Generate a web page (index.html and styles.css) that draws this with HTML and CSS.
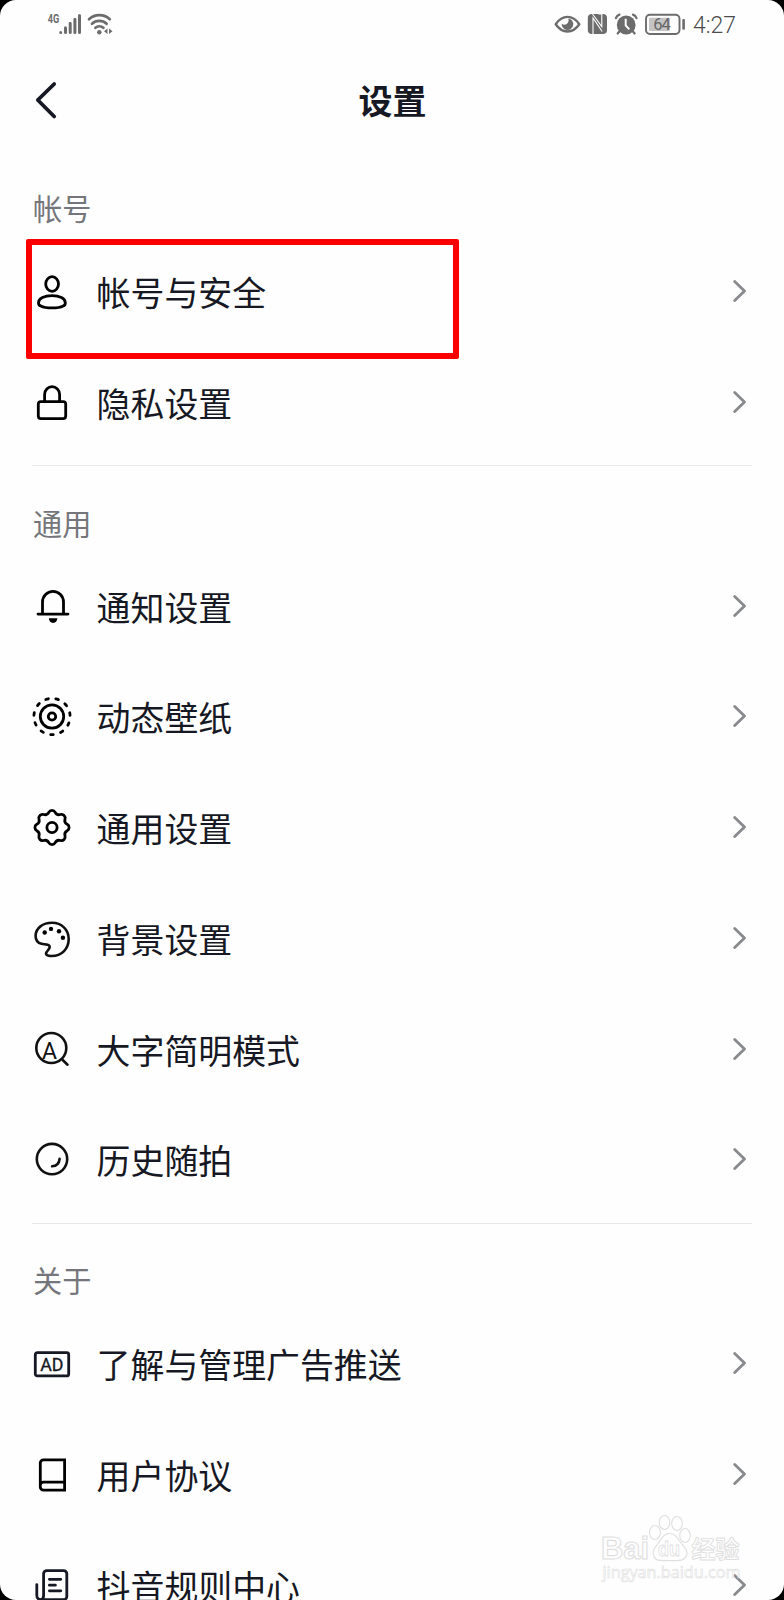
FILE: index.html
```html
<!DOCTYPE html>
<html lang="zh-CN">

<head>
    <meta charset="UTF-8">
    <meta name="viewport" content="width=device-width, initial-scale=1.0">
    <title>设置</title>
    <link rel="stylesheet" href="styles.css">
</head>

<body>
    <div class="phone">
        <div class="status">
            <svg class="status-left" width="70" height="24" viewBox="46 12 70 24">
                <text class="net" x="47.8" y="23" textLength="11.5" lengthAdjust="spacingAndGlyphs">4G</text>
                <g stroke="#6c6c6c" stroke-width="3" stroke-linecap="round">
                    <path d="M60.7 32.4v.1M65.5 27.7v4.8M70.2 23.2v9.3M74.9 19.2v13.3M79.5 15.5v17" />
                </g>
                <g fill="none" stroke="#6c6c6c" stroke-width="2.7" stroke-linecap="round">
                    <path d="M89 19.2a15.5 15.5 0 0 1 20.8 0M92 23.8a10.8 10.8 0 0 1 14.6 0M95.4 27.8a6.3 6.3 0 0 1 8 0" />
                </g>
                <circle cx="99.3" cy="32.2" r="2.2" fill="#6c6c6c" />
                <path d="M107.5 28.5v5.6l-3.5-2.8zM109 28.5v5.6l3.5-2.8z" fill="#6c6c6c" />
            </svg>
            <div class="status-right">
                <svg width="132" height="24" viewBox="554 12 132 24">
                    <path d="M555.7 24.2q5-7.3 11.8-7.3t11.8 7.3q-5 7.3-11.8 7.3t-11.8-7.3z" fill="none" stroke="#6c6c6c" stroke-width="2.4" stroke-linejoin="round" />
                    <path d="M568.5 18.5a5.8 5.8 0 1 1-6.8 5.2q2.5 1.8 4.6.6 2.8-1.7 2.2-5.8z" fill="#6c6c6c" />
                    <rect x="587.8" y="14" width="19.2" height="20" rx="4" fill="#6c6c6c" />
                    <path d="M593 34V18l9.2 13.5M592.5 14l9.3 12.5V14M598.3 14h3.5" fill="none" stroke="#fff" stroke-width="1.1" />
                    <circle cx="626.2" cy="25" r="9.4" fill="#6c6c6c" />
                    <path d="M615.9 18.2q1-2.7 3.6-3.6M632.9 14.6q2.6.9 3.6 3.6M619.3 31.5l-1.6 2M633 31.5l1.6 2" fill="none" stroke="#6c6c6c" stroke-width="2.2" stroke-linecap="round" />
                    <path d="M625.7 18.8v6.5l3.6 4" fill="none" stroke="#fff" stroke-width="2" />
                    <rect x="646" y="14.7" width="33.5" height="19.3" rx="4" fill="none" stroke="#6c6c6c" stroke-width="1.9" />
                    <rect x="649" y="17.7" width="21" height="13.3" rx="1" fill="#c4c4c4" />
                    <text class="battery" x="653.3" y="30.2" textLength="17.5">64</text>
                    <rect x="682.3" y="19" width="2.6" height="10.7" rx="1" fill="#6c6c6c" />
                </svg>
                <span class="time">4:27</span>
            </div>
        </div>

        <div class="header">
            <svg class="back" width="24" height="40" viewBox="0 0 24 40">
                <path d="M19.2 4L2.8 20l16.4 16.5" />
            </svg>
            <h1>设置</h1>
        </div>

        <div class="group">
            <h2>帐号</h2>
            <div class="row">
                <svg class="icon" viewBox="0 0 40 40">
                    <ellipse cx="20.1" cy="12" rx="6.4" ry="7.3" />
                    <path d="M20 23.7c7.5 0 13.3 2.6 13.3 7.2 0 1.3-.6 2.5-2 3-2.5 1.3-6.5 2-11.3 2s-8.8-.7-11.3-2c-1.4-.5-2.2-1.7-2.2-3 0-4.600 6-7.200 13.500-7.200z" />
                </svg>
                <span>帐号与安全</span>
                <svg class="arrow" viewBox="0 0 14 24"><path d="M1.7 2.5l9.8 9.5-9.8 9.5" /></svg>
                <div class="mark"></div>
            </div>
            <div class="row">
                <svg class="icon" viewBox="0 0 40 40">
                    <rect x="6.3" y="18.6" width="27.4" height="17" rx="2.5" />
                    <path d="M12.6 18.6v-7.2a7.5 7.7 0 0 1 15 0v7.2" />
                </svg>
                <span>隐私设置</span>
                <svg class="arrow" viewBox="0 0 14 24"><path d="M1.7 2.5l9.8 9.5-9.8 9.5" /></svg>
            </div>
        </div>

        <div class="group">
            <h2>通用</h2>
            <div class="row">
                <svg class="icon" viewBox="0 0 40 40">
                    <path d="M6 27.1h30M10.5 26.3V15a10.5 10.7 0 0 1 21 0v11.3" />
                    <path class="solid" d="M16.8 31.3h8.600q-.5 4.600-4.300 4.600t-4.300-4.600z" />
                </svg>
                <span>通知设置</span>
                <svg class="arrow" viewBox="0 0 14 24"><path d="M1.7 2.5l9.8 9.5-9.8 9.5" /></svg>
            </div>
            <div class="row">
                <svg class="icon" viewBox="0 0 40 40">
                    <circle cx="20" cy="19.5" r="3.7" />
                    <circle cx="20" cy="19.5" r="11.7" />
                    <circle class="dashes" cx="20" cy="19.5" r="18.1" pathLength="110" transform="rotate(86 20 19.5)" />
                </svg>
                <span>动态壁纸</span>
                <svg class="arrow" viewBox="0 0 14 24"><path d="M1.7 2.5l9.8 9.5-9.8 9.5" /></svg>
            </div>
            <div class="row">
                <svg class="icon" viewBox="0 0 40 40">
                    <g transform="translate(20 19.5)">
                        <circle r="5.1" />
                        <path d="M15.16-3.22A3.65 3.65 0 0 1 15.16 3.22A4.5 4.5 0 0 0 13 8.44A3.65 3.65 0 0 1 8.44 13A4.5 4.5 0 0 0 3.22 15.16A3.65 3.65 0 0 1-3.22 15.16A4.5 4.5 0 0 0-8.44 13A3.65 3.65 0 0 1-13 8.44A4.5 4.5 0 0 0-15.16 3.22A3.65 3.65 0 0 1-15.16-3.22A4.5 4.5 0 0 0-13-8.44A3.65 3.65 0 0 1-8.44-13A4.5 4.5 0 0 0-3.22-15.16A3.65 3.65 0 0 1 3.22-15.16A4.5 4.5 0 0 0 8.44-13A3.65 3.65 0 0 1 13-8.44A4.5 4.5 0 0 0 15.16-3.22z" />
                    </g>
                </svg>
                <span>通用设置</span>
                <svg class="arrow" viewBox="0 0 14 24"><path d="M1.7 2.5l9.8 9.5-9.8 9.5" /></svg>
            </div>
            <div class="row">
                <svg class="icon thin" viewBox="0 0 40 40">
                    <path d="M3.6 17C3.6 9 11 3.8 20 3.8C29.5 3.8 36.7 10.5 36.7 20C36.7 29.5 30 37 19.5 37C14 37 13 35 15 32.5C16.5 30.5 18.5 29 17.5 27C16.5 25 12.5 25.5 9.5 24.8C6 24 3.6 21 3.6 17z" />
                    <g class="solid">
                        <circle cx="12.7" cy="13.5" r="2.2" />
                        <circle cx="19" cy="9.9" r="2.2" />
                        <circle cx="27" cy="12.2" r="2.2" />
                        <circle cx="30.9" cy="18.8" r="2.2" />
                    </g>
                </svg>
                <span>背景设置</span>
                <svg class="arrow" viewBox="0 0 14 24"><path d="M1.7 2.5l9.8 9.5-9.8 9.5" /></svg>
            </div>
            <div class="row">
                <svg class="icon thin" viewBox="0 0 40 40">
                    <circle cx="19.3" cy="18" r="15" />
                    <path d="M30.5 29.8l5 4.9" />
                    <text class="letter-a" x="17.4" y="28.5" text-anchor="middle">A</text>
                </svg>
                <span>大字简明模式</span>
                <svg class="arrow" viewBox="0 0 14 24"><path d="M1.7 2.5l9.8 9.5-9.8 9.5" /></svg>
            </div>
            <div class="row">
                <svg class="icon thin" viewBox="0 0 40 40">
                    <circle cx="20" cy="19.1" r="15.2" />
                    <path d="M27.6 18.8q-.6 6.9-7.5 7.5" />
                </svg>
                <span>历史随拍</span>
                <svg class="arrow" viewBox="0 0 14 24"><path d="M1.7 2.5l9.8 9.5-9.8 9.5" /></svg>
            </div>
        </div>

        <div class="group">
            <h2>关于</h2>
            <div class="row">
                <svg class="icon dark" viewBox="0 0 40 40">
                    <rect x="3.3" y="8.7" width="33.4" height="23.2" rx="2" />
                    <text class="letter-ad" x="8.2" y="26.7" textLength="23.3">AD</text>
                </svg>
                <span>了解与管理广告推送</span>
                <svg class="arrow" viewBox="0 0 14 24"><path d="M1.7 2.5l9.8 9.5-9.8 9.5" /></svg>
            </div>
            <div class="row">
                <svg class="icon" viewBox="0 0 40 40">
                    <path class="sharp" d="M32.6 4.8H11.5a3.2 3.2 0 0 0-3.2 3.2v24a3.2 3.2 0 0 0 3.2 3.2h21.1zM32.6 27.1H11.5a3.2 3.2 0 0 0-3.2 3.2" />
                </svg>
                <span>用户协议</span>
                <svg class="arrow" viewBox="0 0 14 24"><path d="M1.7 2.5l9.8 9.5-9.8 9.5" /></svg>
            </div>
            <div class="row">
                <svg class="icon dark" viewBox="0 0 40 40">
                    <path d="M4.8 18.6v11a4 4 0 0 0 4 4h22.8a3.2 3.2 0 0 0 3.2-3.2V7.8a3.2 3.2 0 0 0-3.2-3.2H14.8a3.2 3.2 0 0 0-3.2 3.2v21.8q0 4-3 4M17.4 13.3h11.4M17.4 19.2h6M17.4 24.8h11.4" />
                </svg>
                <span>抖音规则中心</span>
                <svg class="arrow" viewBox="0 0 14 24"><path d="M1.7 2.5l9.8 9.5-9.8 9.5" /></svg>
            </div>
        </div>

        <!-- watermark over the list -->
        <svg class="watermark" width="150" height="76" viewBox="598 1510 150 76">
            <g fill="#fff" stroke="#dcdcdc" stroke-width="1.1">
                <text class="wm-brand" x="601" y="1559" textLength="48" lengthAdjust="spacingAndGlyphs">Bai</text>
                <ellipse cx="655" cy="1532.5" rx="5.5" ry="7" />
                <ellipse cx="664.5" cy="1522.5" rx="5.3" ry="7" />
                <ellipse cx="677" cy="1523.5" rx="5.3" ry="7" />
                <ellipse cx="685" cy="1535.5" rx="5.3" ry="7" />
                <path d="M669.5 1533.5c6 0 8 5 11.5 9.5s7.5 7 5.5 12.5c-2.5 6.5-9.5 5-17 5s-14 1.5-16-5c-1.5-5.5 1.5-8 5-12.5s5-9.5 11-9.5z" />
                <text class="wm-du" x="658" y="1555.5" textLength="22" lengthAdjust="spacingAndGlyphs">du</text>
                <text class="wm-cn" x="691.5" y="1557.5" textLength="48">经验</text>
                <text class="wm-url" x="602.5" y="1577.5" textLength="138" lengthAdjust="spacingAndGlyphs">jingyan.baidu.com</text>
            </g>
        </svg>
    </div>
</body>

</html>
```
FILE: styles.css
```css
body {
    margin: 0;
    background-color: #000;
    font-family: "Noto Sans CJK SC", sans-serif;
    color: #161823;
}

.phone {
    position: relative;
    width: 784px;
    height: 1600px;
    overflow: hidden;
    background-color: #fefefe;
    border-radius: 16px;
}

.status {
    display: flex;
    justify-content: space-between;
    height: 48px;
    padding: 0 47px 0 46px;
    box-sizing: border-box;
}

.status-left {
    margin-top: 12px;
}

.status-right {
    display: flex;
    padding-top: 12px;
}

.time {
    width: 44px;
    margin-left: 7px;
    font-family: Roboto, sans-serif;
    font-size: 23px;
    font-weight: 300;
    line-height: 27px;
    color: #4c4c4c;
    white-space: nowrap;
}

.net {
    font: bold 12.5px Roboto, sans-serif;
    fill: #6c6c6c;
}

.battery {
    font: 16.5px Roboto, sans-serif;
    fill: #666;
}

.header {
    display: flex;
    align-items: center;
    height: 104px;
    padding: 0 35px;
}

.back {
    fill: none;
    stroke: #161823;
    stroke-width: 3.8;
    stroke-linecap: round;
    stroke-linejoin: round;
}

.header h1 {
    flex: 1;
    margin: 0 23px 0 0;
    font-size: 34px;
    font-weight: 700;
    line-height: 50px;
    text-align: center;
}

.group {
    margin: 0 32px;
    padding-bottom: 7.3px;
    border-bottom: 1px solid #e8e8e8;
}

.group h2 {
    height: 42px;
    margin: 0;
    padding: 34.2px 0 8.5px 1px;
    font-size: 29.2px;
    font-weight: 400;
    line-height: 42px;
    color: #75767b;
}

.row {
    position: relative;
    display: flex;
    align-items: center;
    height: 110.75px;
}

.row span {
    flex: 1;
    margin-left: 24.6px;
    font-size: 33.9px;
    line-height: 50px;
}

.icon {
    width: 40px;
    height: 40px;
    fill: none;
    stroke: #000;
    stroke-width: 2.8;
    stroke-linecap: round;
    stroke-linejoin: round;
}

.icon.thin {
    stroke: #111;
    stroke-width: 2.6;
}

.icon.dark {
    stroke: #161823;
}

.icon .solid {
    fill: #000;
    stroke: none;
}

.icon .sharp {
    stroke-linecap: butt;
    stroke-linejoin: miter;
}

.icon .dashes {
    stroke-dasharray: 2.6 7.4;
}

.letter-a {
    font: 23px Roboto, sans-serif;
    fill: #111;
    stroke: none;
}

.icon .letter-ad {
    font: 17.8px Roboto, sans-serif;
    fill: #161823;
    stroke-width: 0.3;
}

.arrow {
    width: 14px;
    height: 24px;
    margin: 0 5px 2px 0;
    fill: none;
    stroke: #898a8e;
    stroke-width: 2.8;
    stroke-linecap: round;
    stroke-linejoin: round;
}

/* red frame around the first entry */
.mark {
    position: absolute;
    left: -6px;
    top: 2.4px;
    width: 433px;
    height: 120px;
    box-sizing: border-box;
    border: 6.5px solid #fb0000;
    border-radius: 2px;
}

.watermark {
    position: absolute;
    left: 598px;
    top: 1510px;
    opacity: 0.9;
}

.wm-brand {
    font: bold 31px "Liberation Sans", sans-serif;
}

.wm-du {
    font: bold 20px "Liberation Sans", sans-serif;
    stroke-width: 0.8;
}

.wm-cn {
    font: bold 24px "Noto Sans CJK SC", sans-serif;
    stroke-width: 0.9;
}

.wm-url {
    font: 17px "Open Sans", sans-serif;
    stroke-width: 0.6;
}
```
